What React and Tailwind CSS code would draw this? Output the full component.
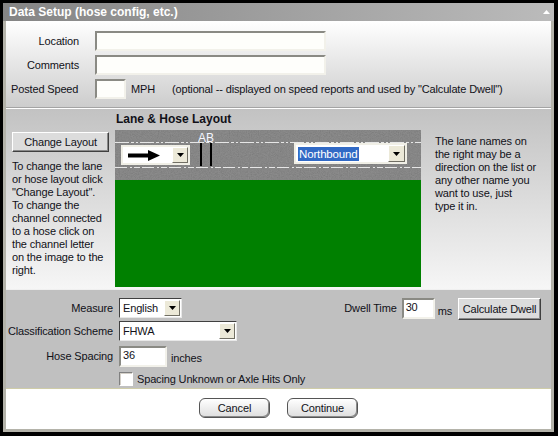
import React from 'react';

const sunken =
  'border-2 border-t-[#8a8a84] border-l-[#8a8a84] border-b-[#f2f1ea] border-r-[#f2f1ea] bg-[#fefefb]';

function DropButton({ className = '' }) {
  return (
    <div
      className={`flex items-center justify-center bg-[#ece9d8] border border-t-white border-l-white border-b-[#716f64] border-r-[#716f64] ${className}`}
    >
      <svg width="7" height="4" viewBox="0 0 7 4">
        <path d="M0 0h7L3.5 4z" fill="#000" />
      </svg>
    </div>
  );
}

function Select({ value, width }) {
  return (
    <div
      className={`flex items-stretch h-[20px] ${width} border border-t-[#404040] border-l-[#404040] border-b-[#e8e8e8] border-r-[#e8e8e8] bg-white`}
    >
      <span className="flex-1 pl-[3px] leading-[18px]">{value}</span>
      <DropButton className="w-[16px] m-[1px]" />
    </div>
  );
}

function ClassicButton({ children, className = '' }) {
  return (
    <button
      className={`bg-[#dcdcdc] border border-t-white border-l-white border-b-[#404040] border-r-[#404040] shadow-[inset_-1px_-1px_0_#8a8a8a] text-[11px] whitespace-nowrap ${className}`}
    >
      {children}
    </button>
  );
}

function PillButton({ children }) {
  return (
    <button className="w-[71px] h-[20px] rounded-[6px] border border-[#555] bg-gradient-to-b from-white to-[#dedede] shadow-[inset_-1px_-1px_0_#8a8a8a] text-[11px] leading-[18px]">
      {children}
    </button>
  );
}

function Road() {
  return (
    <div className="relative w-[306px] h-[157px]">
      <svg width="306" height="157" viewBox="0 0 306 157" className="block">
        <defs>
          <filter id="noise">
            <feTurbulence type="fractalNoise" baseFrequency="0.9" numOctaves="2" seed="3" />
            <feColorMatrix type="saturate" values="0" />
            <feComponentTransfer>
              <feFuncA type="linear" slope="0" intercept="0.18" />
            </feComponentTransfer>
          </filter>
        </defs>
        <rect width="306" height="50" fill="#7a7a7a" />
        <rect width="306" height="50" filter="url(#noise)" />
        <rect y="50" width="306" height="107" fill="#008000" />
        <line x1="0" y1="12.5" x2="306" y2="12.5" stroke="#e6e6e6" strokeDasharray="14 2 3 2 2 2" />
        <line x1="0" y1="37.5" x2="306" y2="37.5" stroke="#e6e6e6" strokeDasharray="12 3 2 2 6 2" />
        <rect x="85" y="13" width="2" height="23" fill="#000" />
        <rect x="95" y="13" width="2" height="23" fill="#000" />
        <text x="83" y="12" fontSize="12" fill="#f4f6ff" fontFamily="Liberation Sans, Arial, sans-serif">A</text>
        <text x="91" y="12" fontSize="12" fill="#f4f6ff" fontFamily="Liberation Sans, Arial, sans-serif">B</text>
      </svg>

      {/* direction dropdown */}
      <div className="absolute left-[6px] top-[15px] w-[69px] h-[20px] flex border-2 border-[#f0efe6] bg-white">
        <div className="flex-1 flex items-center pl-[5px]">
          <svg width="32" height="11" viewBox="0 0 32 11">
            <rect x="0" y="3.5" width="22" height="4" fill="#000" />
            <path d="M20 0L32 5.5L20 11z" fill="#000" />
          </svg>
        </div>
        <DropButton className="w-[16px]" />
      </div>

      {/* lane name dropdown */}
      <div className="absolute left-[179px] top-[13px] w-[113px] h-[21px] flex border-2 border-[#f0efe6] bg-white">
        <div className="flex-1 flex items-center pl-[2px]">
          <span className="bg-[#316ac5] text-white text-[11.5px] leading-[14px] px-[1px]">Northbound</span>
        </div>
        <DropButton className="w-[17px]" />
      </div>
    </div>
  );
}

export default function App() {
  return (
    <div className="w-[558px] h-[436px] bg-black pt-[3px] pl-[3px] font-['Liberation_Sans',Arial,sans-serif] text-[11px] tracking-[-0.15px] text-[#111118] whitespace-nowrap">
      <div className="w-[551px] h-[429px] flex flex-col">
        {/* title bar */}
        <div className="h-[18px] flex items-center justify-between bg-gradient-to-r from-[#858585] to-[#bbbbbb] pl-[6px] pr-[4px]">
          <span className="text-white font-bold text-[12px] leading-[14px] tracking-normal">Data Setup (hose config, etc.)</span>
          <svg width="7" height="4" viewBox="0 0 7 4">
            <path d="M0 4h7L3.5 0z" fill="#fff" />
          </svg>
        </div>

        <div className="flex-1 flex flex-col border-x-[3px] border-b-[3px] border-[#b4b3aa]">
          {/* location / comments */}
          <div className="h-[86px] bg-gradient-to-b from-white to-[#cdcdcd] pt-[10px] flex flex-col gap-[4px]">
            <div className="flex items-center h-[20px]">
              <span className="w-[73px] text-right">Location</span>
              <div className={`ml-[16px] w-[231px] h-[20px] ${sunken}`} />
            </div>
            <div className="flex items-center h-[20px]">
              <span className="w-[73px] text-right">Comments</span>
              <div className={`ml-[16px] w-[231px] h-[20px] ${sunken}`} />
            </div>
            <div className="flex items-center h-[20px]">
              <span className="w-[73px] pl-[5px]">Posted Speed</span>
              <div className={`ml-[16px] w-[31px] h-[20px] ${sunken}`} />
              <span className="ml-[5px]">MPH</span>
              <span className="ml-[17px]">(optional -- displayed on speed reports and used by "Calculate Dwell")</span>
            </div>
          </div>

          {/* lane & hose layout */}
          <div className="h-[182px] flex border-t border-[#a4a4a4] shadow-[inset_0_1px_0_#ffffff] bg-gradient-to-b from-[#c2c2c2] to-[#f6f6f6]">
            <div className="w-[97px] ml-[6px] pt-[24px]">
              <ClassicButton className="w-[97px] h-[20px]">Change Layout</ClassicButton>
              <p className="mt-[8px] leading-[13px]">
                To change the lane<br />
                or hose layout click<br />
                "Change Layout".<br />
                To change the<br />
                channel connected<br />
                to a hose click on<br />
                the channel letter<br />
                on the image to the<br />
                right.
              </p>
            </div>
            <div className="ml-[6px] pt-[4px]">
              <div className="font-bold text-[12px] leading-[14px] h-[18px] pl-[1px] tracking-normal">Lane &amp; Hose Layout</div>
              <Road />
            </div>
            <div className="ml-[14px] w-[112px] pt-[27px] leading-[13px]">
              The lane names on<br />
              the right may be a<br />
              direction on the list or<br />
              any other name you<br />
              want to use, just<br />
              type it in.
            </div>
          </div>

          {/* measure / classification */}
          <div className="h-[99px] bg-[#c0c0c0] border-t border-[#f0f0f0] pt-[8px] pr-[10px] flex flex-col">
            <div className="flex items-start h-[20px]">
              <span className="w-[107px] text-right leading-[20px]">Measure</span>
              <div className="ml-[6px]">
                <Select value="English" width="w-[63px]" />
              </div>
              <div className="flex-1" />
              <span className="leading-[21px]">Dwell Time</span>
              <div className={`ml-[5px] w-[33px] h-[21px] ${sunken} bg-white pl-[2px] leading-[15px]`}>30</div>
              <span className="ml-[3px] self-end leading-[13px] mt-[8px]">ms</span>
              <ClassicButton className="ml-[6px] w-[83px] h-[22px]">Calculate Dwell</ClassicButton>
            </div>
            <div className="flex items-center mt-[3px] h-[20px]">
              <span className="w-[107px] text-right">Classification Scheme</span>
              <div className="ml-[6px]">
                <Select value="FHWA" width="w-[118px]" />
              </div>
            </div>
            <div className="flex items-center mt-[5px] h-[21px]">
              <span className="w-[107px] text-right">Hose Spacing</span>
              <div className={`ml-[6px] w-[48px] h-[21px] ${sunken} bg-white pl-[2px] leading-[15px]`}>36</div>
              <span className="ml-[4px] mt-[4px]">inches</span>
            </div>
            <div className="flex items-center mt-[5px] h-[14px]">
              <div className="ml-[113px] w-[14px] h-[14px] border border-t-[#808080] border-l-[#808080] border-b-white border-r-white bg-white shadow-[inset_1px_1px_0_#d4d0c8]" />
              <span className="ml-[4px]">Spacing Unknown or Axle Hits Only</span>
            </div>
          </div>

          {/* buttons */}
          <div className="flex-1 bg-white border-t border-[#cfcca8] flex justify-center items-start pt-[9px] gap-[17px]">
            <PillButton>Cancel</PillButton>
            <PillButton>Continue</PillButton>
          </div>
        </div>
      </div>
    </div>
  );
}
